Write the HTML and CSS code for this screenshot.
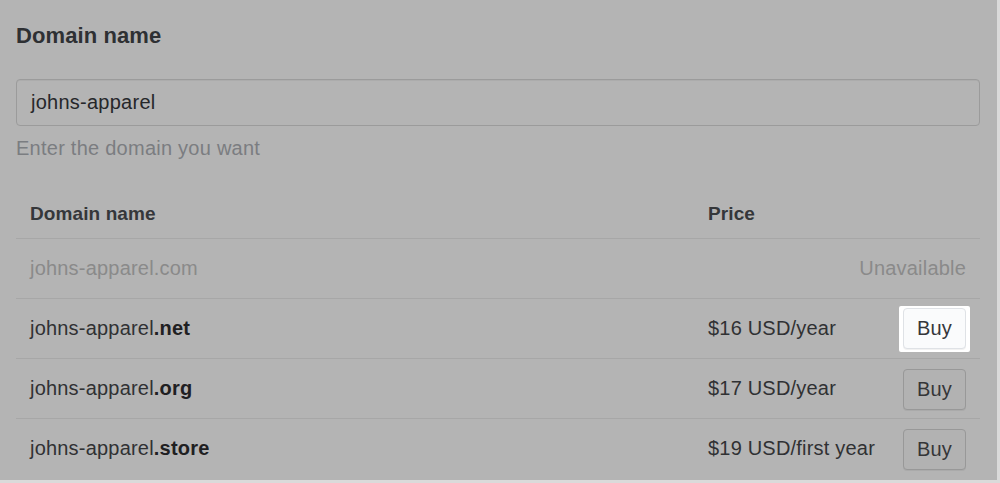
FILE: index.html
```html
<!DOCTYPE html>
<html lang="en">
<head>
<meta charset="utf-8">
<title>Domain name</title>
<link rel="stylesheet" href="styles.css">
</head>
<body>
<div class="card">
  <h2 class="title">Domain name</h2>
  <div class="input"><span>johns-apparel</span></div>
  <p class="help">Enter the domain you want</p>
  <div class="table">
    <div class="row head">
      <div class="cell">Domain name</div>
      <div class="cell">Price</div>
      <div class="cell"></div>
    </div>
    <div class="row disabled">
      <div class="cell">johns-apparel<b>.com</b></div>
      <div class="cell span">Unavailable</div>
    </div>
    <div class="row">
      <div class="cell">johns-apparel<b>.net</b></div>
      <div class="cell">$16 USD/year</div>
      <div class="cell"><span class="ring"><button class="btn focus">Buy</button></span></div>
    </div>
    <div class="row">
      <div class="cell">johns-apparel<b>.org</b></div>
      <div class="cell">$17 USD/year</div>
      <div class="cell"><button class="btn">Buy</button></div>
    </div>
    <div class="row">
      <div class="cell">johns-apparel<b>.store</b></div>
      <div class="cell">$19 USD/first year</div>
      <div class="cell"><button class="btn">Buy</button></div>
    </div>
  </div>
</div>
</body>
</html>
```

FILE: styles.css
```css
* { box-sizing: border-box; }
html, body { margin: 0; padding: 0; }
body {
  background: #dadada;
  font-family: "Liberation Sans", Arial, sans-serif;
  color: #303133;
  height: 483px;
  overflow: hidden;
}
.card {
  width: 997px;
  height: 480px;
  background: #b4b4b4;
  padding: 22px 17px 0 16px;
  overflow: hidden;
}
.title {
  margin: 0;
  font-size: 22px;
  line-height: 28px;
  font-weight: bold;
  color: #2e3033;
  letter-spacing: 0.1px;
}
.input {
  margin-top: 29px;
  height: 47px;
  border: 1.5px solid #9b9b9b;
  border-radius: 4px;
  display: flex;
  align-items: center;
  padding-left: 14px;
  font-size: 20px;
  letter-spacing: 0.25px;
  color: #26272a;
  box-shadow: inset 0 1px 0 rgba(0,0,0,0.04);
}
.help {
  margin: 10px 0 0;
  font-size: 20px;
  line-height: 24px;
  color: #7b7d81;
  letter-spacing: 0.25px;
}
.row {
  display: grid;
  grid-template-columns: 678px 1fr auto;
  align-items: center;
  height: 60px;
  padding: 0 14px;
  border-top: 1px solid #a7a7a7;
  font-size: 20px;
  letter-spacing: 0.2px;
}
.row.head {
  border-top: none;
  height: 79px;
  padding-top: 42px;
  align-items: start;
  font-size: 19px;
  font-weight: bold;
  color: #35373a;
  letter-spacing: 0.1px;
  line-height: 24px;
  border-bottom: 1px solid #a7a7a7;
}
.row.head + .row { border-top: none; height: 59px; }
.cell b { font-weight: bold; color: #1f2022; }
.row.disabled { color: #8a8a8a; }
.row.disabled .cell b { color: #8a8a8a; font-weight: normal; }
.cell.span { grid-column: 2 / 4; text-align: right; }
.btn {
  width: 63px;
  height: 41px;
  margin-top: 2px;
  border: 1.5px solid #989898;
  border-radius: 4px;
  background: #b2b2b2;
  font-family: "Liberation Sans", Arial, sans-serif;
  font-size: 20px;
  letter-spacing: 0.2px;
  color: #353638;
  padding: 0;
  display: block;
  box-shadow: 0 1px 0 rgba(0,0,0,0.05);
}
.ring {
  display: block;
  background: #ffffff;
  padding: 2px 4px 3px;
  margin: 0 -4px;
  border-radius: 2px;
}
.btn.focus {
  margin-top: 0;
  background: #fafbfc;
  border: 1.5px solid #dfe2e6;
  color: #35373b;
}
```
